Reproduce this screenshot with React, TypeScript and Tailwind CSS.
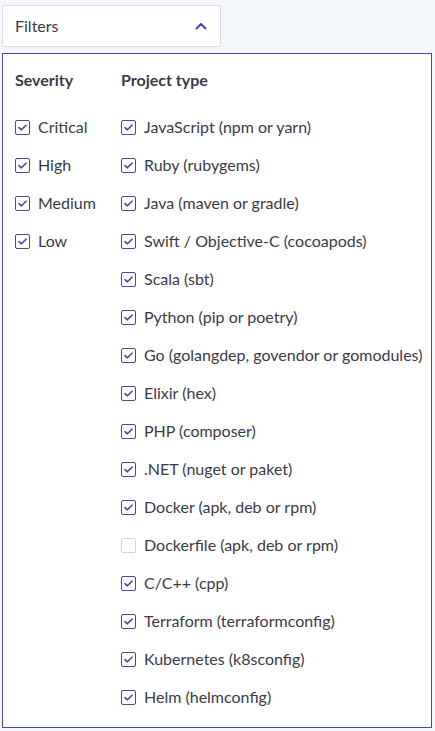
import React from "react";

const severities = ["Critical", "High", "Medium", "Low"];
const projects: [string, boolean][] = [
  ["JavaScript (npm or yarn)", true],
  ["Ruby (rubygems)", true],
  ["Java (maven or gradle)", true],
  ["Swift / Objective-C (cocoapods)", true],
  ["Scala (sbt)", true],
  ["Python (pip or poetry)", true],
  ["Go (golangdep, govendor or gomodules)", true],
  ["Elixir (hex)", true],
  ["PHP (composer)", true],
  [".NET (nuget or paket)", true],
  ["Docker (apk, deb or rpm)", true],
  ["Dockerfile (apk, deb or rpm)", false],
  ["C/C++ (cpp)", true],
  ["Terraform (terraformconfig)", true],
  ["Kubernetes (k8sconfig)", true],
  ["Helm (helmconfig)", true],
];

function Box({ checked }: { checked: boolean }) {
  return (
    <span
      className={
        "flex h-[15px] w-[15px] shrink-0 items-center justify-center rounded-[2px] border bg-white " +
        (checked ? "border-[#4b45a1]" : "border-[#d6d6de]")
      }
    >
      {checked && (
        <svg width="9" height="7" viewBox="0 0 9 7" fill="none">
          <path d="M1 3.6 L3.4 5.8 L8 1.2" stroke="#4b45a1" strokeWidth="1.6" strokeLinecap="round" strokeLinejoin="round" />
        </svg>
      )}
    </span>
  );
}

function Row({ label, checked }: { label: string; checked: boolean }) {
  return (
    <div className="flex h-[38px] items-center gap-[8px]">
      <Box checked={checked} />
      <span className="whitespace-nowrap text-[16px] leading-[20px] text-[#3b3a47]">{label}</span>
    </div>
  );
}

export default function App() {
  return (
    <div
      className="h-[731px] w-full overflow-hidden bg-[#f4f7fb] pl-[2px] pt-[5px]"
      style={{ fontFamily: "Lato, 'Open Sans', sans-serif" }}
    >
      <div className="flex h-[42px] w-[219px] items-center justify-between rounded-[2px] border border-[#dcdde6] bg-white pl-[12px] pr-[13px]">
        <span className="text-[16px] text-[#3b3a47]">Filters</span>
        <svg width="12" height="8" viewBox="0 0 12 8" fill="none">
          <path d="M1.5 6.5 L6 2 L10.5 6.5" stroke="#4b45a1" strokeWidth="2" strokeLinecap="round" strokeLinejoin="round" />
        </svg>
      </div>
      <div className="mt-[6px] flex h-[675px] w-[430px] border border-[#4b45a1] bg-white pl-[12px] pt-[14px]">
        <div className="w-[106px]">
          <div className="mb-[16px] text-[16px] font-bold leading-[24px] text-[#3b3a47]">Severity</div>
          {severities.map((s) => (
            <Row key={s} label={s} checked={true} />
          ))}
        </div>
        <div>
          <div className="mb-[16px] text-[16px] font-bold leading-[24px] text-[#3b3a47]">Project type</div>
          {projects.map(([p, c]) => (
            <Row key={p} label={p} checked={c} />
          ))}
        </div>
      </div>
    </div>
  );
}
